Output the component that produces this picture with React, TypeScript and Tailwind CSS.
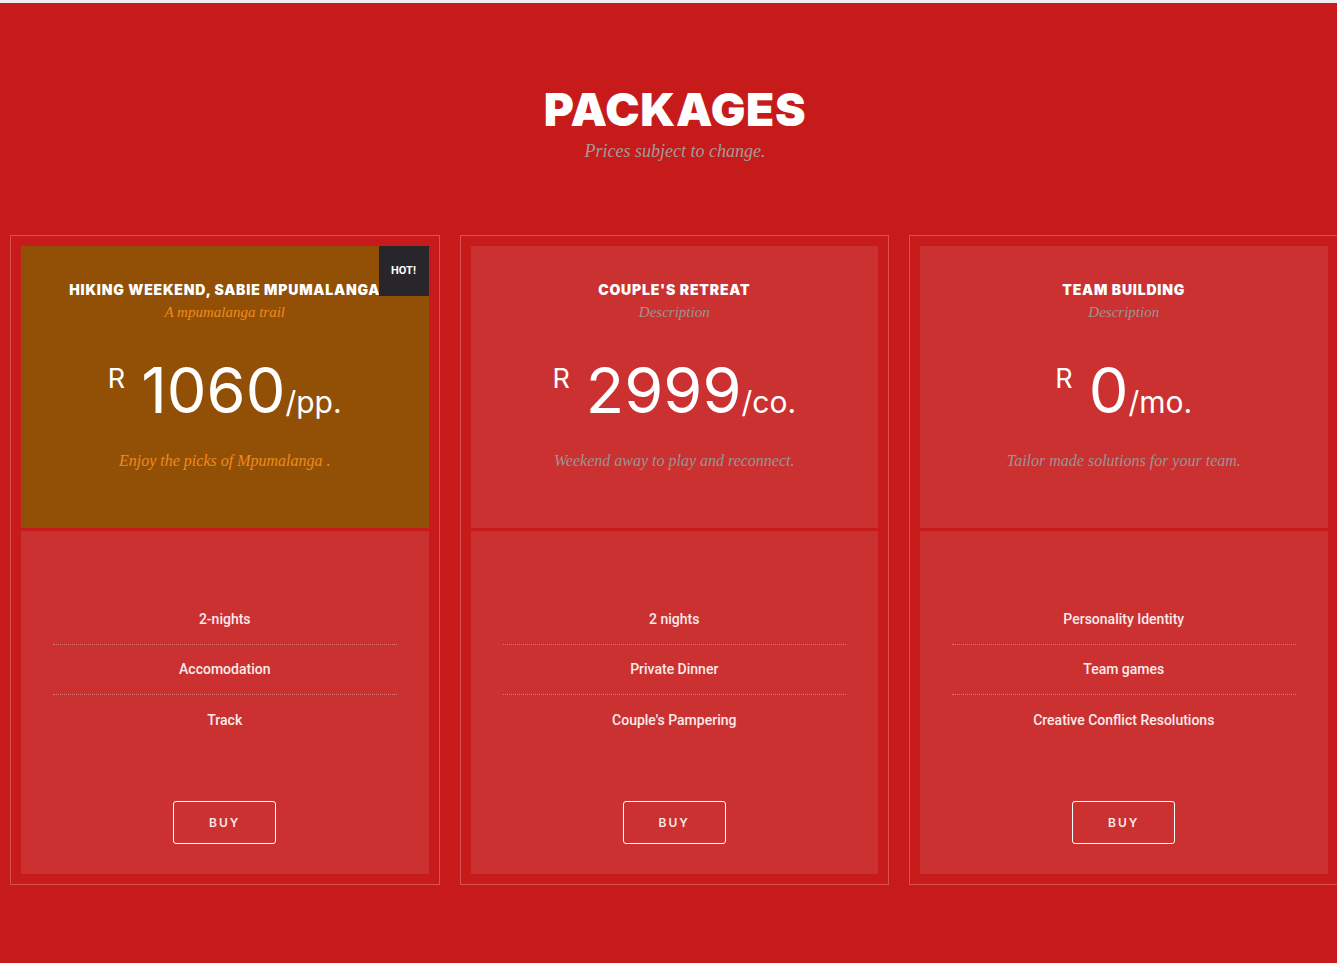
const serif = "font-['Liberation_Serif',serif] italic";
const sans = "font-['Inter',sans-serif]";
const roboto = "font-['Roboto',sans-serif]";

type Pkg = {
  title: string;
  subtitle: string;
  price: string;
  unit: string;
  note: string;
  items: string[];
  hot?: boolean;
};

const packages: Pkg[] = [
  {
    title: "HIKING WEEKEND, SABIE MPUMALANGA",
    subtitle: "A mpumalanga trail",
    price: "1060",
    unit: "/pp.",
    note: "Enjoy the picks of Mpumalanga .",
    items: ["2-nights", "Accomodation", "Track"],
    hot: true,
  },
  {
    title: "COUPLE'S RETREAT",
    subtitle: "Description",
    price: "2999",
    unit: "/co.",
    note: "Weekend away to play and reconnect.",
    items: ["2 nights", "Private Dinner", "Couple's Pampering"],
  },
  {
    title: "TEAM BUILDING",
    subtitle: "Description",
    price: "0",
    unit: "/mo.",
    note: "Tailor made solutions for your team.",
    items: ["Personality Identity", "Team games", "Creative Conflict Resolutions"],
  },
];

function PackageCard({ pkg }: { pkg: Pkg }) {
  return (
    <div className="w-[429.5px] shrink-0 border border-[#d8504f] p-[10px]">
      {/* top half */}
      <div
        className={
          "relative flex h-[282px] flex-col items-center pt-[34px] text-center " +
          (pkg.hot ? "bg-[#925006]" : "bg-[#cb3130]")
        }
      >
        {pkg.hot && (
          <div className={`absolute right-0 top-0 z-10 flex h-[50px] w-[50px] items-center justify-center bg-[#29262b] text-[11px] font-bold text-white ${roboto}`}>
            HOT!
          </div>
        )}
        <h3 className={`whitespace-nowrap text-[14px] font-black leading-[20px] tracking-[0.8px] text-white ${sans}`}>
          {pkg.title}
        </h3>
        <p className={`mt-[2px] text-[15px] leading-[20px] ${serif} ${pkg.hot ? "text-[#ee8b1e]" : "text-[#9c9494]"}`}>
          {pkg.subtitle}
        </p>
        <div className={`mt-[37px] flex items-start text-white ${sans}`}>
          <span className="mr-[16px] mt-[6px] text-[27px] font-normal leading-none">R</span>
          <span className="flex items-baseline">
            <span className="text-[63px] font-normal leading-none">{pkg.price}</span>
            <span className="text-[30px] font-normal leading-none">{pkg.unit}</span>
          </span>
        </div>
        <p className={`mt-[29px] text-[16px] leading-[20px] ${serif} ${pkg.hot ? "text-[#ee8b1e]" : "text-[#9c9494]"}`}>
          {pkg.note}
        </p>
      </div>

      {/* bottom half */}
      <div className="mt-[3px] flex h-[343px] flex-col items-center bg-[#cb3130] pt-[64px]">
        <ul className={`w-full px-[32px] text-center text-[14px] font-medium text-[#fbeaea] ${roboto}`}>
          {pkg.items.map((item, i) => (
            <li
              key={item}
              className={
                "flex h-[50px] items-center justify-center " +
                (i < pkg.items.length - 1 ? "border-b border-dotted border-[#e07474]" : "")
              }
            >
              {item}
            </li>
          ))}
        </ul>
        <button
          className={`mt-[56px] h-[43px] w-[103px] rounded-[3px] border border-white text-[12px] font-semibold tracking-[2px] text-[#fbeaea] ${sans}`}
        >
          BUY
        </button>
      </div>
    </div>
  );
}

export default function App() {
  return (
    <main className="min-h-screen overflow-hidden bg-[#c61b1a]">
      <div className="h-[3px] bg-[#efefef]" />
      <section className="flex flex-col items-center pl-[13px] pt-[83px] text-center">
        <h1 className={`text-[46px] font-black leading-none tracking-[0.6px] text-white ${sans}`}>
          PACKAGES
        </h1>
        <p className={`mt-[7px] text-[18px] leading-[24px] text-[#a39a9a] ${serif}`}>
          Prices subject to change.
        </p>
      </section>
      <div className="mt-[72px] flex gap-[20px] pl-[10px]">
        {packages.map((p) => (
          <PackageCard key={p.title} pkg={p} />
        ))}
      </div>
    </main>
  );
}
